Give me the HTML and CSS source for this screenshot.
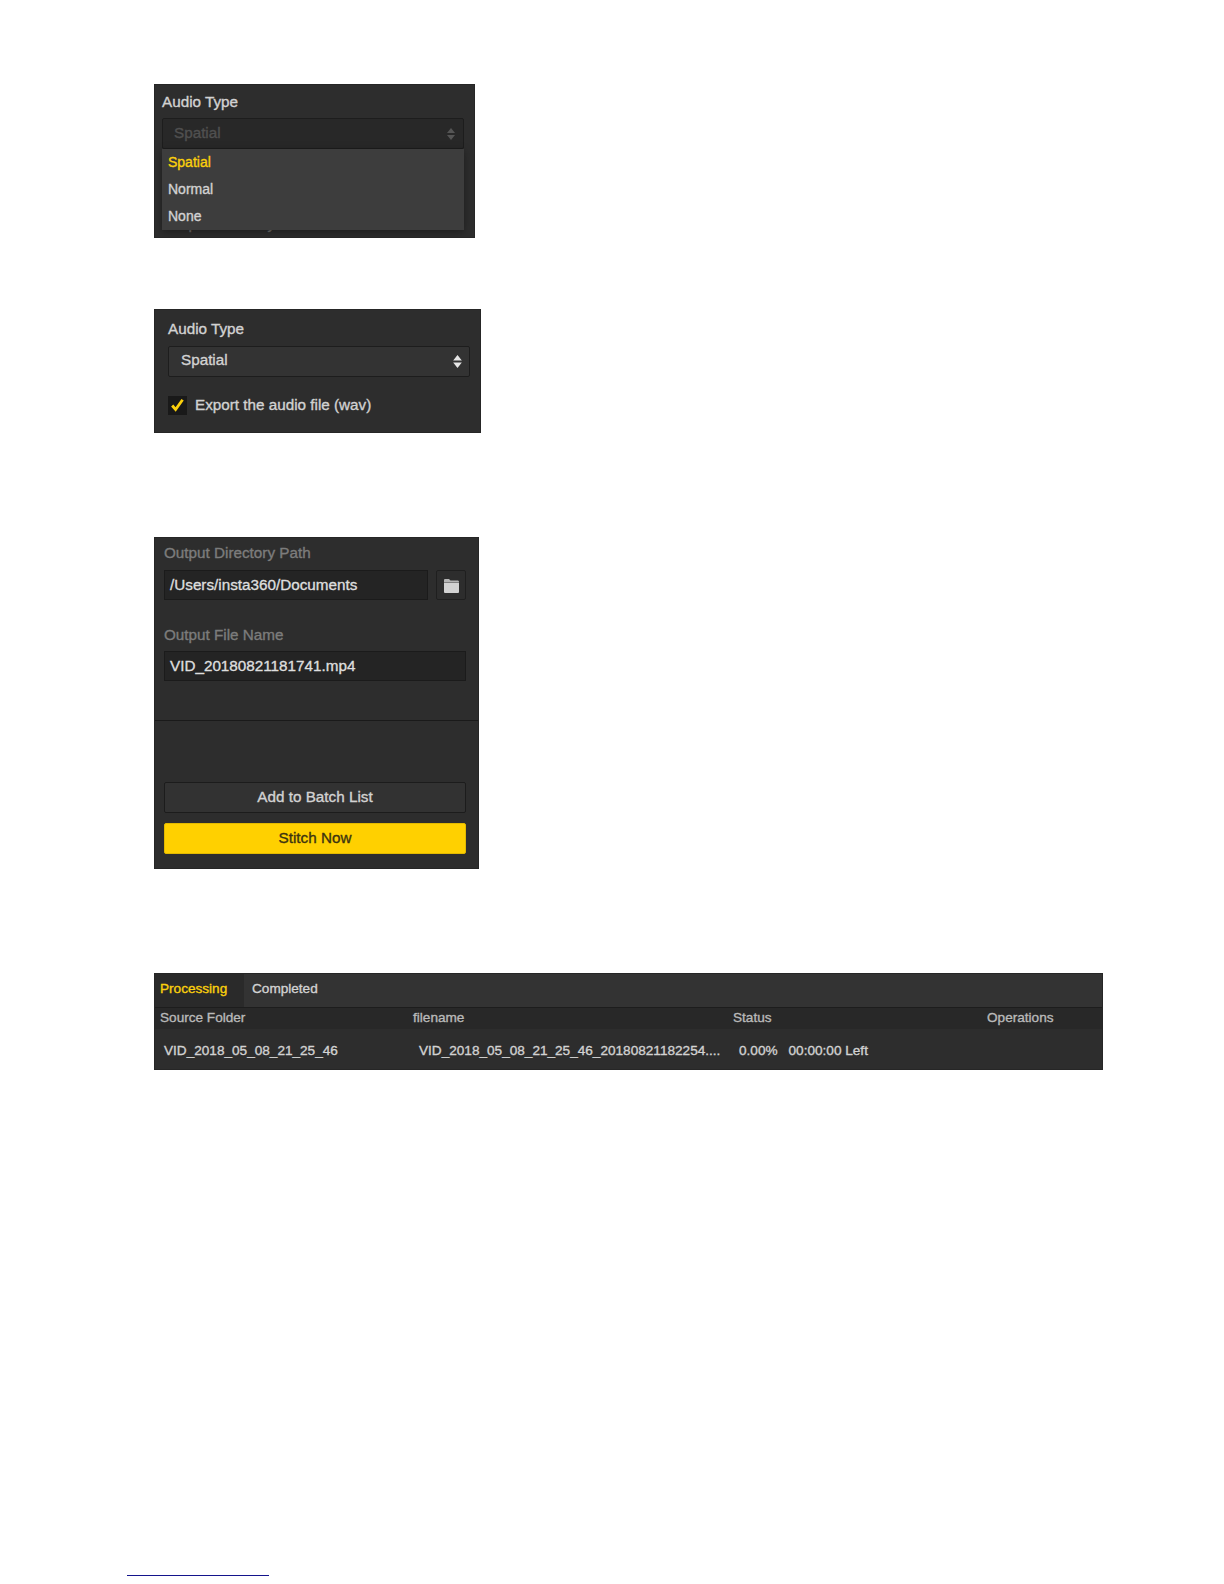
FILE: index.html
```html
<!DOCTYPE html>
<html lang="en">
<head>
    <meta charset="UTF-8">
    <meta name="viewport" content="width=device-width, initial-scale=1.0">
    <title>Stitching - Audio and Output Settings</title>
    <link rel="stylesheet" href="styles.css">
</head>
<body>
    <div class="panel audio-open">
        <div class="label">Audio Type</div>
        <div class="select-wrap">
            <div class="select disabled">
                <span>Spatial</span>
                <svg class="arrows" width="8" height="12" viewBox="0 0 8 12"><path d="M4 0 8 5H0zM0 7h8l-4 5z"/></svg>
            </div>
            <ul class="menu">
                <li class="selected">Spatial</li>
                <li>Normal</li>
                <li>None</li>
            </ul>
        </div>
        <div class="label covered">Output Directory Path</div>
    </div>

    <div class="panel audio">
        <div class="label">Audio Type</div>
        <div class="select">
            <span>Spatial</span>
            <svg class="arrows" width="9" height="13" viewBox="0 0 8 12"><path d="M4 0 8 5H0zM0 7h8l-4 5z"/></svg>
        </div>
        <div class="check-row">
            <span class="checkbox">
                <svg width="13" height="14" viewBox="0 0 13 14"><path d="M1.2 7.500 4.6 11.500 11.6 1.8"/></svg>
            </span>
            <span>Export the audio file (wav)</span>
        </div>
    </div>

    <div class="panel output">
        <div class="output-fields">
            <div class="label muted">Output Directory Path</div>
            <div class="path-row">
                <div class="input path">/Users/insta360/Documents</div>
                <div class="browse">
                    <svg width="15" height="14" viewBox="0 0 15 14"><path d="M0 3V1Q0 0 1 0H5L6.500 1.500H14Q15 1.500 15 3z" fill="#b5b5b5"/><path d="M0 3.500H15V13Q15 14 14 14H1Q0 14 0 13z" fill="#d2d2d2"/></svg>
                </div>
            </div>
            <div class="label muted file-label">Output File Name</div>
            <div class="input file">VID_20180821181741.mp4</div>
        </div>
        <div class="actions">
            <div class="btn">Add to Batch List</div>
            <div class="btn primary">Stitch Now</div>
        </div>
    </div>

    <div class="panel batch">
        <div class="tabs">
            <div class="tab active">Processing</div>
            <div class="tab">Completed</div>
        </div>
        <div class="row head">
            <span>Source Folder</span>
            <span>filename</span>
            <span>Status</span>
            <span>Operations</span>
        </div>
        <div class="row item">
            <span>VID_2018_05_08_21_25_46</span>
            <span>VID_2018_05_08_21_25_46_20180821182254....</span>
            <span class="progress"><span>0.00%</span><span>00:00:00 Left</span></span>
        </div>
    </div>

    <div class="footer-line"></div>
</body>
</html>
```

FILE: styles.css
```css
* {
    margin: 0;
    padding: 0;
    box-sizing: border-box;
}

body {
    font-family: "Liberation Sans", Arial, sans-serif;
    font-size: 15.25px;
    line-height: 20px;
    color: #d2d2d2;
    background: #fff;
    padding: 84px 0 0 154px;
    -webkit-text-stroke: 0.35px;
}

.panel {
    background: #2d2d2d;
    border: 1px solid #262626;
    overflow: hidden;
}

.label {
    height: 20px;
    white-space: nowrap;
}

.muted {
    color: #7c7c7c;
}

.select {
    display: flex;
    align-items: center;
    justify-content: space-between;
    width: 302px;
    height: 31px;
    padding: 0 7px 4px 12px;
    background: #333;
    border: 1px solid #1d1d1d;
    border-radius: 2px;
}

.arrows {
    fill: #e6e6e6;
    position: relative;
    top: 2px;
}

/* audio type, list open */
.audio-open {
    width: 321px;
    height: 154px;
    padding: 7px 6px 0 7px;
}

.select-wrap {
    position: relative;
    margin-top: 6px;
}

.select.disabled {
    padding: 0 8px 2px 11px;
    background: #282828;
    color: #505050;
}

.select.disabled .arrows {
    top: 1px;
    fill: #555;
}

.menu {
    position: absolute;
    top: 31px;
    left: 0;
    width: 302px;
    height: 81px;
    list-style: none;
    font-size: 14px;
    background: #3d3d3d;
    box-shadow: 0 2px 8px rgba(0,0,0,0.35);
}

.menu li {
    height: 27px;
    line-height: 26px;
    padding-left: 6px;
}

.menu .selected {
    color: #fbd00c;
}

.covered {
    margin: 65px 0 0 2px;
    color: #6a6a6a;
}

/* audio type, closed */
.audio {
    width: 327px;
    height: 124px;
    margin-top: 71px;
    padding: 9px 13px 0;
}

.audio .select {
    margin-top: 7px;
}

.check-row {
    display: flex;
    align-items: center;
    gap: 8px;
    margin-top: 18px;
}

.checkbox {
    display: flex;
    align-items: center;
    justify-content: center;
    width: 19px;
    height: 19px;
    background: #191919;
}

.checkbox svg {
    fill: none;
    stroke: #fbd00c;
    stroke-width: 2.8;
}

/* output settings */
.output {
    width: 325px;
    height: 332px;
    margin-top: 104px;
}

.output-fields {
    height: 183px;
    padding: 5px 9px 0;
    border-bottom: 1px solid #1a1a1a;
}

.path-row {
    display: flex;
    gap: 8px;
    margin-top: 7px;
}

.input {
    height: 30px;
    padding: 4px 5px 0;
    background: #242424;
    border: 1px solid #1b1b1b;
    color: #dedede;
}

.path {
    width: 264px;
}

.browse {
    display: flex;
    align-items: center;
    justify-content: center;
    width: 30px;
    height: 30px;
    padding-top: 1px;
    border: 1px solid #1f1f1f;
    border-radius: 2px;
}

.file-label {
    margin-top: 25px;
}

.file {
    width: 302px;
    margin-top: 6px;
}

.actions {
    display: flex;
    flex-direction: column;
    gap: 10px;
    padding: 61px 9px 0;
}

.btn {
    width: 302px;
    height: 31px;
    padding-top: 4px;
    text-align: center;
    background: #323232;
    border: 1px solid #1c1c1c;
    border-radius: 2px;
}

.primary {
    background: #ffd000;
    border-color: #e3b900;
    color: #3c3410;
}

/* batch list */
.batch {
    width: 949px;
    height: 97px;
    margin-top: 104px;
    font-size: 13.6px;
}

.tabs {
    display: flex;
    height: 34px;
    background: #333;
    border-bottom: 1px solid #1d1d1d;
}

.tab {
    padding: 5px 8px 0;
}

.tab.active {
    width: 89px;
    padding-left: 5px;
    background: #2a2a2a;
    color: #fbd00c;
}

.row {
    display: grid;
    grid-template-columns: 253px 320px 254px 1fr;
    white-space: nowrap;
}

.head {
    height: 21px;
    padding-left: 5px;
    background: #282828;
    color: #b9b9b9;
}

.item {
    padding: 12px 0 0 9px;
    grid-template-columns: 255px 320px 1fr;
}

.progress {
    display: flex;
    gap: 11px;
}

.footer-line {
    width: 142px;
    height: 1px;
    margin: 505px 0 0 -27px;
    background: #14148c;
}
```
